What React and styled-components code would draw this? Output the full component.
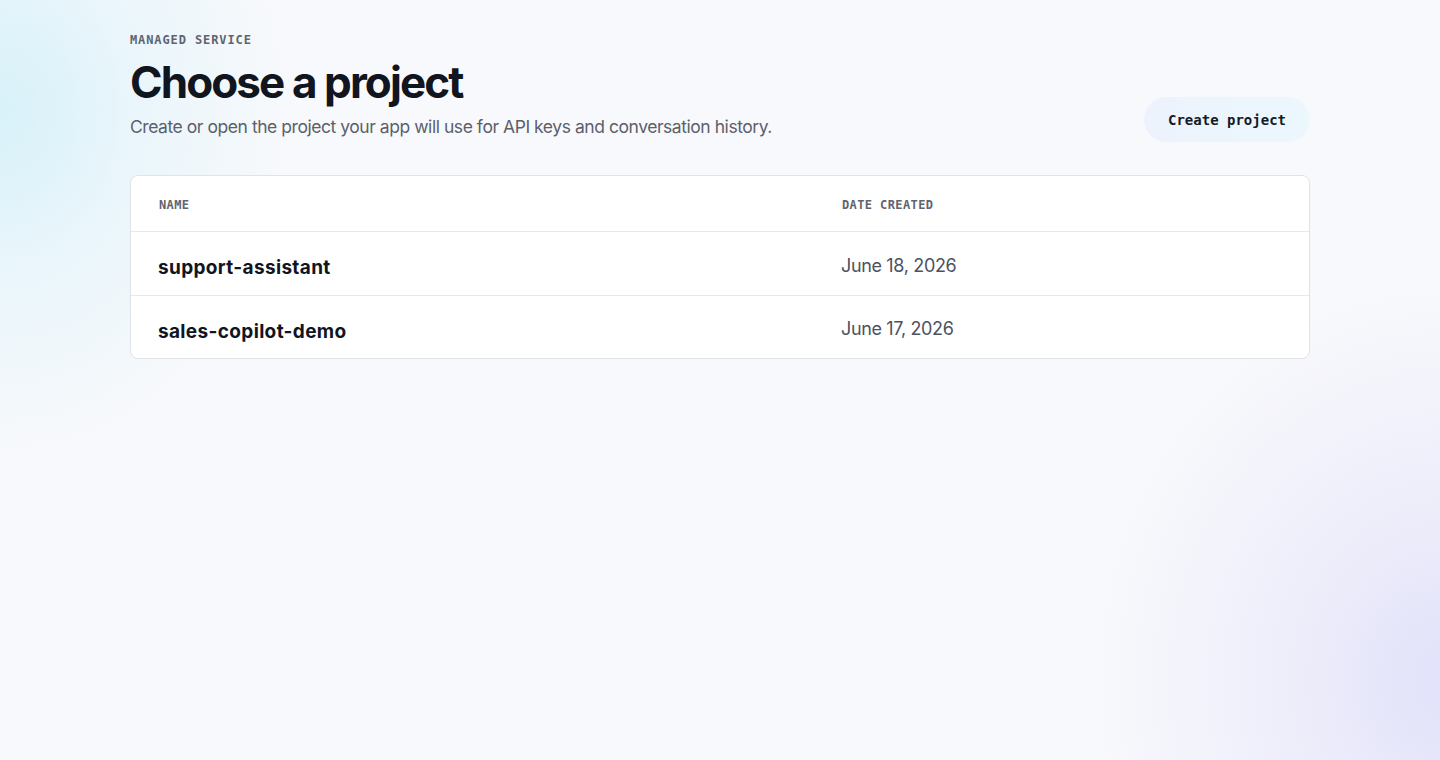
import React from 'react'
import styled, { createGlobalStyle } from 'styled-components'

const projects = [
    { name: 'support-assistant', created: 'June 18, 2026' },
    { name: 'sales-copilot-demo', created: 'June 17, 2026' },
]

const GlobalStyle = createGlobalStyle`
    html, body {
        margin: 0;
        padding: 0;
    }
    body {
        font-family: Inter, "Noto Sans", sans-serif;
        background: #f8f9fc;
    }
`

const App = () => {
    return (
        <>
            <GlobalStyle />
            <Page>
                <Content>
                    <Header>
                        <Intro>
                            <Eyebrow>Managed service</Eyebrow>
                            <Title>Choose a project</Title>
                            <Subtitle>Create or open the project your app will use for API keys and conversation history.</Subtitle>
                        </Intro>
                        <CreateButton>Create project</CreateButton>
                    </Header>
                    <Table>
                        <HeadRow>
                            <HeadCell>Name</HeadCell>
                            <HeadCell>Date created</HeadCell>
                        </HeadRow>
                        {projects.map(p => (
                            <Row key={p.name}>
                                <NameCell>{p.name}</NameCell>
                                <DateCell>{p.created}</DateCell>
                            </Row>
                        ))}
                    </Table>
                </Content>
            </Page>
        </>
    )
}

const Page = styled.div`
    min-height: 760px;
    box-sizing: border-box;
    padding: 32px 130px;
    background:
        radial-gradient(ellipse 300px 360px at 0px 110px, rgba(212, 240, 249, 0.9) 0%, rgba(222, 243, 250, 0.55) 45%, rgba(248, 249, 252, 0) 100%),
        radial-gradient(ellipse 360px 400px at 1450px 680px, rgba(225, 225, 250, 1) 0%, rgba(232, 231, 250, 0.65) 45%, rgba(248, 249, 252, 0) 100%),
        #f8f9fc;
`
const Content = styled.div`
    display: flex;
    flex-direction: column;
    gap: 34px;
`
const Header = styled.div`
    display: flex;
    align-items: flex-end;
    justify-content: space-between;
`
const Intro = styled.div`
    display: flex;
    flex-direction: column;
`
const Eyebrow = styled.div`
    font-family: "DejaVu Sans Mono", "Liberation Mono", monospace;
    font-weight: 700;
    font-size: 12px;
    letter-spacing: 0.9px;
    text-transform: uppercase;
    color: #5f6470;
    line-height: 16px;
`
const Title = styled.h1`
    margin: 7px 0 0;
    font-size: 44px;
    font-weight: 700;
    letter-spacing: -1.9px;
    line-height: 54px;
    color: #111520;
`
const Subtitle = styled.p`
    margin: 4px 0 0;
    font-size: 17.5px;
    letter-spacing: -0.45px;
    line-height: 28px;
    color: #5b606c;
`
const CreateButton = styled.button`
    height: 45px;
    padding: 0 24px;
    margin-bottom: -1px;
    border: 0;
    border-radius: 999px;
    background: linear-gradient(90deg, #edf2fc, #ebf8fc);
    font-family: "DejaVu Sans Mono", "Liberation Mono", monospace;
    font-weight: 700;
    font-size: 14px;
    color: #151a24;
    cursor: pointer;
`
const Table = styled.div`
    background: #ffffff;
    border: 1px solid #e1e3e8;
    border-radius: 8px;
    overflow: hidden;
`
const HeadRow = styled.div`
    display: grid;
    grid-template-columns: 683px 1fr;
    height: 55px;
    align-items: center;
    padding: 0 28px;
    border-bottom: 1px solid #e6e8ec;
`
const HeadCell = styled.div`
    font-family: "DejaVu Sans Mono", "Liberation Mono", monospace;
    font-weight: 700;
    font-size: 12px;
    letter-spacing: 0.4px;
    text-transform: uppercase;
    color: #5f6470;
    padding-top: 2px;
`
const Row = styled.div`
    display: grid;
    grid-template-columns: 683px 1fr;
    box-sizing: border-box;
    height: 63px;
    align-items: center;
    padding: 0 27px;
    & + & {
        border-top: 1px solid #e6e8ec;
    }
`
const NameCell = styled.div`
    font-size: 19px;
    font-weight: 700;
    letter-spacing: 0.35px;
    color: #111520;
    padding-top: 8px;
`
const DateCell = styled.div`
    font-size: 18px;
    letter-spacing: -0.35px;
    color: #4d525e;
    padding-top: 3px;
`

export default App
